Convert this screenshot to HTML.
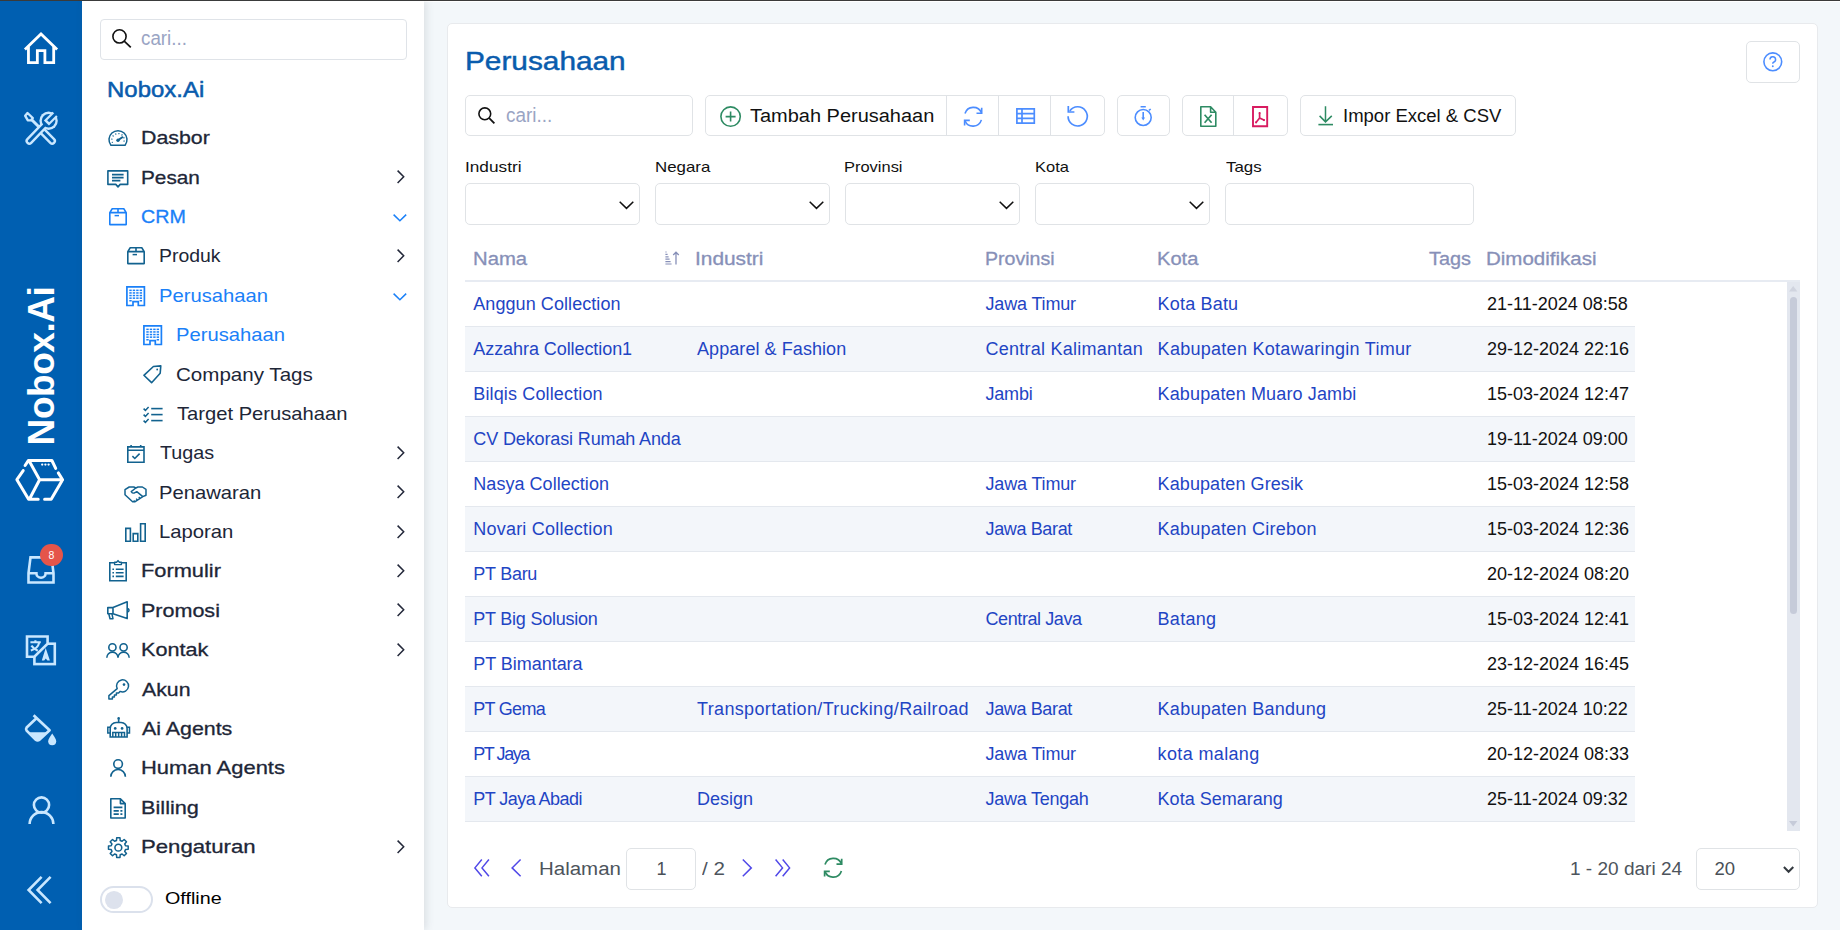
<!DOCTYPE html>
<html lang="id">
<head>
<meta charset="utf-8">
<title>Perusahaan - Nobox.Ai</title>
<style>
*{box-sizing:border-box}
html,body{margin:0;padding:0}
body{width:1840px;height:930px;overflow:hidden;position:relative;background:#f3f7fa;font-family:"Liberation Sans",sans-serif;color:#222}
.abs{position:absolute}
svg{display:block;overflow:visible}
#topline{left:0;top:0;width:1840px;height:1px;background:#3a3a3a}
#topwhite{left:82px;top:1px;width:1758px;height:1px;background:#fff}
#rail{left:0;top:1px;width:82px;height:929px;background:#005fb1}
#menu{left:82px;top:1px;width:342px;height:929px;background:#fff;box-shadow:2px 0 8px rgba(70,75,85,.14)}
#card{left:447px;top:23px;width:1371px;height:885px;background:#fff;border:1px solid #e8eaed;border-radius:5px}
/* menu */
.msearch{left:18px;top:18px;width:307px;height:41px;border:1px solid #dfe3e8;border-radius:4px;background:#fff}

.bx{border:1px solid #e0e3e6;border-radius:5px;background:#fff}
.row{left:17px;width:1170px;height:45px;border-bottom:1px solid #e4e8ee;font-size:18px;line-height:45px;color:#1f45c4;white-space:nowrap}
.row span{position:absolute;top:0}
.row span.d{color:#111}
.pt{height:30px;line-height:30px;white-space:nowrap;transform-origin:0 50%}
</style>
</head>
<body>
<div id="topline" class="abs"></div>
<div id="topwhite" class="abs"></div>
<aside id="rail" class="abs">
<svg class="abs" style="left:24px;top:31px" width="34" height="32" viewBox="0 0 34 32" fill="none" ><path d="M0.9,17.5 L17,2 L33.1,17.5" stroke="#ffffff" stroke-width="2.8" stroke-linejoin="miter"/><path d="M4.45,14.6 V30.6 H13.35 V18.6 H20.9 V30.6 H29.7 V14.6" stroke="#ffffff" stroke-width="2.8"/></svg>
<svg class="abs" style="left:24px;top:111px" width="34" height="33.5" viewBox="0 0 34 33.5" fill="none" ><path d="M16.9,17.5 L28.2,29" stroke="#c9e7ff" stroke-width="7.6" stroke-linecap="round"/><path d="M16.9,17.5 L28.2,29" stroke="#005fb1" stroke-width="2.8" stroke-linecap="round"/><path d="M7,7 L15.5,15.5" stroke="#c9e7ff" stroke-width="3"/><path d="M3.5,1 L1.2,3.8 L3.7,8.2 L6.9,8.4 L8.8,6 Z" stroke="#c9e7ff" stroke-width="2.4" stroke-linejoin="round" fill="#005fb1"/><path d="M5.3,29 L24.6,8.8" stroke="#c9e7ff" stroke-width="7.6" stroke-linecap="round"/><circle cx="24.6" cy="8.8" r="9.2" fill="#c9e7ff"/><circle cx="24.6" cy="8.8" r="6.8" fill="#005fb1"/><path d="M5.3,29 L20.4,13.2" stroke="#005fb1" stroke-width="2.8" stroke-linecap="round"/><path d="M22.4,11 L31.1,2.3" stroke="#c9e7ff" stroke-width="7.2"/><path d="M24.2,9.2 L33.4,0" stroke="#005fb1" stroke-width="2.8"/></svg>
<div class="abs" style="left:41.6px;top:365.2px;width:0;height:0"><div style="position:absolute;left:-100px;top:-25px;width:200px;height:50px;line-height:50px;text-align:center;transform:rotate(-90deg);font-weight:bold;font-size:37px;letter-spacing:-0.45px;color:#fff;white-space:nowrap">Nobox.Ai</div></div>
<svg class="abs" style="left:16px;top:458px" width="48" height="42" viewBox="0 0 48 42" fill="none" ><path d="M9.1,6.5 L12.3,1.6 L35.9,1.5 L39.7,9.4 M42.3,13.9 L46.6,20.7 L35.2,40.3 L28.6,40.3 M22.2,40.3 L12.6,40.3 L0.9,20.7 L7.2,11.6 M13.9,3.3 L23.6,20.7 L46.6,20.7 M23.6,20.7 L13.9,39.2" stroke="#ffffff" stroke-width="3" stroke-linejoin="round" stroke-linecap="round"/><circle cx="26.2" cy="5.6" r="1.15" fill="#ffffff"/><circle cx="29.4" cy="5.6" r="1.15" fill="#ffffff"/><circle cx="32.6" cy="5.6" r="1.15" fill="#ffffff"/></svg>
<svg class="abs" style="left:27px;top:555px" width="28" height="28" viewBox="0 0 28 28" fill="none" ><path d="M3.5,1.4 H24.5 L26.5,17 V26.5 H1.5 V17 Z" stroke="#c9e7ff" stroke-width="2.6" stroke-linejoin="miter"/><path d="M1.5,17.2 H9.4 A4.6,4.6 0 0 0 18.6,17.2 H26.5" stroke="#c9e7ff" stroke-width="2.6"/></svg>
<div class="abs" style="left:40.1px;top:542.6px;width:22.8px;height:22.8px;border-radius:50%;background:#e5554a;color:#fff;font-size:10.5px;line-height:22.8px;text-align:center">8</div>
<svg class="abs" style="left:25px;top:633.7px" width="31.2" height="30.5" viewBox="0 0 31.2 30.5" fill="none" ><rect x="9.4" y="8.7" width="20.4" height="20.4" stroke="#c9e7ff" stroke-width="2.6"/><path d="M2,1.5 H22.6 V8.7 L9.4,21.7 H2 Z" fill="#005fb1" stroke="#c9e7ff" stroke-width="2.6"/><path d="M5.4,7.3 H15.8 M10.4,5.2 V7.3 M14.2,7.6 Q13,13.4 5.8,15.6 M6.4,10.6 Q8.4,13.6 12.8,15.8" stroke="#c9e7ff" stroke-width="2.1"/><path d="M16.8,25.4 L20.7,13 L24.9,25.4 H22.4 L20.8,23.6 L19.2,25.4 Z" fill="#c9e7ff"/></svg>
<svg class="abs" style="left:25px;top:713.4px" width="31.3" height="30.4" viewBox="0 0 31.3 30.4" fill="none" ><path d="M8.6,1.2 L24.6,16.2 L14.6,25.6 Q12.6,27 10.6,25.6 L1.6,16.6 Q0.6,15 1.6,13.6 L11.4,4.2" stroke="#c9e7ff" stroke-width="2.7" stroke-linejoin="round"/><path d="M4.6,18.2 H21.8 L14.2,25 Q12.6,26 11,25 Z" fill="#c9e7ff"/><path d="M27.2,19.6 Q31.2,25.2 31.2,27.2 A4,4 0 0 1 23.2,27.2 Q23.2,25.2 27.2,19.6 Z" fill="#c9e7ff"/></svg>
<svg class="abs" style="left:27.5px;top:794.8px" width="26.5" height="29.2" viewBox="0 0 26.5 29.2" fill="none" ><circle cx="13.5" cy="9" r="7.6" stroke="#c9e7ff" stroke-width="2.6"/><path d="M1.6,28 A11.9,11.9 0 0 1 25.4,28" stroke="#c9e7ff" stroke-width="2.6"/></svg>
<svg class="abs" style="left:27px;top:874.8px" width="24.6" height="28" viewBox="0 0 24.6 28" fill="none" ><path d="M14.6,0.9 L1.6,14 L14.6,27.1 M23.6,0.9 L10.6,14 L23.6,27.1" stroke="#c9e7ff" stroke-width="2.6"/></svg>
</aside>
<nav id="menu" class="abs">
<div class="abs msearch"><svg class="abs" style="left:11px;top:9.2px" width="20" height="20" viewBox="0 0 20 20" fill="none" ><circle cx="7.5" cy="7.4" r="6.6" stroke="#111" stroke-width="1.6"/><path d="M12.2,12.1 L18.8,18.4" stroke="#111" stroke-width="1.7"/></svg></div>
<div class="abs pt" style="left:59.04px;top:22.00px;font-size:19.5px;color:#9aa5c4;transform:scaleX(0.9622);">cari...</div>
<div class="abs pt" style="left:24.77px;top:74.00px;font-size:21.5px;color:#0a5cad;transform:scaleX(1.1143);-webkit-text-stroke:0.5px #0a5cad;">Nobox.Ai</div>
<svg class="abs" style="left:26.0px;top:129.0px" width="20" height="16" viewBox="0 0 20 16" fill="none" ><path d="M2.9,15.2 A9,9 0 1 1 17.1,15.2 Z" stroke="#12628f" stroke-width="1.5"  stroke-linejoin="round"/><path d="M4.6,12.8 A6.2,6.2 0 1 1 15.4,12.8" stroke="#12628f" stroke-width="1.3"  stroke-dasharray="1.1 2.2"/><path d="M10,10.3 L14.3,7.2" stroke="#12628f" stroke-width="2"  stroke-linecap="round"/><circle cx="10" cy="10.3" r="1.7" fill="#12628f"/></svg>
<div class="abs pt" style="left:59.28px;top:122.00px;font-size:19px;color:#202637;transform:scaleX(1.1233);-webkit-text-stroke:0.3px #202637;">Dasbor</div>
<svg class="abs" style="left:25.0px;top:169.3px" width="21.6" height="18" viewBox="0 0 21.6 18" fill="none" ><path d="M0.9,0.9 H20.7 V14.4 H13.2 L11,16.9 L8.8,14.4 H0.9 Z" stroke="#12628f" stroke-width="1.6"  stroke-linejoin="round"/><path d="M5,4.6 H16.6 M5,7.6 H16.6 M5,10.6 H13.4" stroke="#12628f" stroke-width="1.9" /></svg>
<div class="abs pt" style="left:59.31px;top:162.00px;font-size:19px;color:#202637;transform:scaleX(1.0923);-webkit-text-stroke:0.3px #202637;">Pesan</div>
<svg class="abs" style="left:314.9px;top:169.19px" width="7.4" height="13.6" viewBox="0 0 7.4 13.6" fill="none" ><path d="M0.6,0.6 L6.7,6.8 L0.6,13" stroke="#23283a" stroke-width="1.5" /></svg>
<svg class="abs" style="left:27.0px;top:207.4px" width="18" height="17.4" viewBox="0 0 18 17.4" fill="none" ><path d="M0.8,4.6 L3.2,0.8 H14.8 L17.2,4.6 V16.6 H0.8 Z M0.8,4.6 H17.2 M9,0.8 V4.6" stroke="#1a80f8" stroke-width="1.6"  stroke-linejoin="round"/><path d="M5.6,7.6 H10" stroke="#1a80f8" stroke-width="1.5" /></svg>
<div class="abs pt" style="left:59.36px;top:201.00px;font-size:19px;color:#1a80f8;transform:scaleX(1.0366);-webkit-text-stroke:0.3px #1a80f8;">CRM</div>
<svg class="abs" style="left:311.2px;top:213.48px" width="13.8" height="7.4" viewBox="0 0 13.8 7.4" fill="none" ><path d="M0.6,0.6 L6.9,6.7 L13.2,0.6" stroke="#1a80f8" stroke-width="1.5" /></svg>
<svg class="abs" style="left:44.6px;top:246.3px" width="18" height="17.4" viewBox="0 0 18 17.4" fill="none" ><path d="M0.8,4.6 L3.2,0.8 H14.8 L17.2,4.6 V16.6 H0.8 Z M0.8,4.6 H17.2 M9,0.8 V4.6" stroke="#12628f" stroke-width="1.6"  stroke-linejoin="round"/><path d="M5.6,7.6 H10" stroke="#12628f" stroke-width="1.5" /></svg>
<div class="abs pt" style="left:76.65px;top:240.00px;font-size:18.5px;color:#202637;transform:scaleX(1.0491);">Produk</div>
<svg class="abs" style="left:314.9px;top:247.97px" width="7.4" height="13.6" viewBox="0 0 7.4 13.6" fill="none" ><path d="M0.6,0.6 L6.7,6.8 L0.6,13" stroke="#23283a" stroke-width="1.5" /></svg>
<svg class="abs" style="left:44.0px;top:285.0px" width="19.3" height="20.4" viewBox="0 0 19.3 20.4" fill="none" ><path d="M0.9,0.9 H18.4 V19.5 H12.3 V15.6 H7 V19.5 H0.9 Z" stroke="#1a80f8" stroke-width="1.7"  stroke-linejoin="miter"/><rect x="3.30" y="3.60" width="2.4" height="1.5" fill="#1a80f8"/><rect x="6.75" y="3.60" width="2.4" height="1.5" fill="#1a80f8"/><rect x="10.20" y="3.60" width="2.4" height="1.5" fill="#1a80f8"/><rect x="13.65" y="3.60" width="2.4" height="1.5" fill="#1a80f8"/><rect x="3.30" y="6.20" width="2.4" height="1.5" fill="#1a80f8"/><rect x="6.75" y="6.20" width="2.4" height="1.5" fill="#1a80f8"/><rect x="10.20" y="6.20" width="2.4" height="1.5" fill="#1a80f8"/><rect x="13.65" y="6.20" width="2.4" height="1.5" fill="#1a80f8"/><rect x="3.30" y="8.80" width="2.4" height="1.5" fill="#1a80f8"/><rect x="6.75" y="8.80" width="2.4" height="1.5" fill="#1a80f8"/><rect x="10.20" y="8.80" width="2.4" height="1.5" fill="#1a80f8"/><rect x="13.65" y="8.80" width="2.4" height="1.5" fill="#1a80f8"/><rect x="3.30" y="11.40" width="2.4" height="1.5" fill="#1a80f8"/><rect x="6.75" y="11.40" width="2.4" height="1.5" fill="#1a80f8"/><rect x="10.20" y="11.40" width="2.4" height="1.5" fill="#1a80f8"/><rect x="13.65" y="11.40" width="2.4" height="1.5" fill="#1a80f8"/><rect x="3.30" y="14.00" width="2.4" height="1.5" fill="#1a80f8"/><rect x="13.65" y="14.00" width="2.4" height="1.5" fill="#1a80f8"/></svg>
<div class="abs pt" style="left:76.61px;top:280.00px;font-size:18.5px;color:#1a80f8;transform:scaleX(1.0918);">Perusahaan</div>
<svg class="abs" style="left:311.2px;top:292.26px" width="13.8" height="7.4" viewBox="0 0 13.8 7.4" fill="none" ><path d="M0.6,0.6 L6.9,6.7 L13.2,0.6" stroke="#1a80f8" stroke-width="1.5" /></svg>
<svg class="abs" style="left:61.4px;top:323.9px" width="19.3" height="20.4" viewBox="0 0 19.3 20.4" fill="none" ><path d="M0.9,0.9 H18.4 V19.5 H12.3 V15.6 H7 V19.5 H0.9 Z" stroke="#1a80f8" stroke-width="1.7"  stroke-linejoin="miter"/><rect x="3.30" y="3.60" width="2.4" height="1.5" fill="#1a80f8"/><rect x="6.75" y="3.60" width="2.4" height="1.5" fill="#1a80f8"/><rect x="10.20" y="3.60" width="2.4" height="1.5" fill="#1a80f8"/><rect x="13.65" y="3.60" width="2.4" height="1.5" fill="#1a80f8"/><rect x="3.30" y="6.20" width="2.4" height="1.5" fill="#1a80f8"/><rect x="6.75" y="6.20" width="2.4" height="1.5" fill="#1a80f8"/><rect x="10.20" y="6.20" width="2.4" height="1.5" fill="#1a80f8"/><rect x="13.65" y="6.20" width="2.4" height="1.5" fill="#1a80f8"/><rect x="3.30" y="8.80" width="2.4" height="1.5" fill="#1a80f8"/><rect x="6.75" y="8.80" width="2.4" height="1.5" fill="#1a80f8"/><rect x="10.20" y="8.80" width="2.4" height="1.5" fill="#1a80f8"/><rect x="13.65" y="8.80" width="2.4" height="1.5" fill="#1a80f8"/><rect x="3.30" y="11.40" width="2.4" height="1.5" fill="#1a80f8"/><rect x="6.75" y="11.40" width="2.4" height="1.5" fill="#1a80f8"/><rect x="10.20" y="11.40" width="2.4" height="1.5" fill="#1a80f8"/><rect x="13.65" y="11.40" width="2.4" height="1.5" fill="#1a80f8"/><rect x="3.30" y="14.00" width="2.4" height="1.5" fill="#1a80f8"/><rect x="13.65" y="14.00" width="2.4" height="1.5" fill="#1a80f8"/></svg>
<div class="abs pt" style="left:93.91px;top:319.00px;font-size:18.5px;color:#1a80f8;transform:scaleX(1.0918);">Perusahaan</div>
<svg class="abs" style="left:61.4px;top:364.2px" width="18.7" height="18.6" viewBox="0 0 18.7 18.6" fill="none" ><path d="M0.9,10.3 L10.4,1.5 L17.8,0.9 L17.2,8.3 L8.6,17.7 Z" stroke="#12628f" stroke-width="1.6"  stroke-linejoin="round"/><circle cx="14.2" cy="4.5" r="0.9" fill="#12628f"/></svg>
<div class="abs pt" style="left:93.89px;top:359.00px;font-size:18.5px;color:#202637;transform:scaleX(1.1115);">Company Tags</div>
<svg class="abs" style="left:61.4px;top:405.0px" width="19.6" height="17" viewBox="0 0 19.6 17" fill="none" ><path d="M0.6,2.6 L2.4,4.4 L5.6,1.0" stroke="#12628f" stroke-width="1.5" /><path d="M8.2,2.6 H19.6" stroke="#12628f" stroke-width="1.6" /><path d="M0.6,8.6 L2.4,10.4 L5.6,7.0" stroke="#12628f" stroke-width="1.5" /><path d="M8.2,8.6 H19.6" stroke="#12628f" stroke-width="1.6" /><path d="M0.6,14.6 L2.4,16.4 L5.6,13.0" stroke="#12628f" stroke-width="1.5" /><path d="M8.2,14.6 H19.6" stroke="#12628f" stroke-width="1.6" /></svg>
<div class="abs pt" style="left:95.00px;top:398.00px;font-size:18.5px;color:#202637;transform:scaleX(1.0903);">Target Perusahaan</div>
<svg class="abs" style="left:44.9px;top:443.5px" width="17.8" height="18" viewBox="0 0 17.8 18" fill="none" ><path d="M0.8,1.9 H17 V17.3 H0.8 Z M0.8,5.2 H17 M4.1,0 V2 M13.7,0 V2" stroke="#12628f" stroke-width="1.6" /><path d="M5.4,11.2 L7.8,13.5 L12.6,8.6" stroke="#12628f" stroke-width="1.6" /></svg>
<div class="abs pt" style="left:77.70px;top:437.00px;font-size:18.5px;color:#202637;transform:scaleX(1.0680);">Tugas</div>
<svg class="abs" style="left:314.9px;top:444.92px" width="7.4" height="13.6" viewBox="0 0 7.4 13.6" fill="none" ><path d="M0.6,0.6 L6.7,6.8 L0.6,13" stroke="#23283a" stroke-width="1.5" /></svg>
<svg class="abs" style="left:42.0px;top:485.0px" width="23" height="16.6" viewBox="0 0 23 16.6" fill="none" ><path d="M1,3.6 L5.2,1 H9.8 L11.8,2 L14,1 H18.4 L22,3.4 V9.2 L18.8,10.6 L10.8,15.8 L8.6,15.8 L1,8.8 Z" stroke="#12628f" stroke-width="1.5"  stroke-linejoin="round"/><path d="M11.8,2 L7.2,5.6 Q8.8,8 11,6.6 L12.8,5.6 L18.8,10.6 M10.8,15.8 L9.8,14.4 M13.4,14.2 L12.2,12.6 M16,12.4 L14.8,10.8" stroke="#12628f" stroke-width="1.4"  stroke-linejoin="round"/></svg>
<div class="abs pt" style="left:76.61px;top:477.00px;font-size:18.5px;color:#202637;transform:scaleX(1.0924);">Penawaran</div>
<svg class="abs" style="left:314.9px;top:484.31px" width="7.4" height="13.6" viewBox="0 0 7.4 13.6" fill="none" ><path d="M0.6,0.6 L6.7,6.8 L0.6,13" stroke="#23283a" stroke-width="1.5" /></svg>
<svg class="abs" style="left:43.0px;top:521.6px" width="21" height="19" viewBox="0 0 21 19" fill="none" ><path d="M0.8,5.4 H5.4 V18.2 H0.8 Z M8.2,10.6 H12.8 V18.2 H8.2 Z M15.6,0.8 H20.2 V18.2 H15.6 Z" stroke="#12628f" stroke-width="1.6" /></svg>
<div class="abs pt" style="left:76.60px;top:516.00px;font-size:18.5px;color:#202637;transform:scaleX(1.0955);">Laporan</div>
<svg class="abs" style="left:314.9px;top:523.7px" width="7.4" height="13.6" viewBox="0 0 7.4 13.6" fill="none" ><path d="M0.6,0.6 L6.7,6.8 L0.6,13" stroke="#23283a" stroke-width="1.5" /></svg>
<svg class="abs" style="left:27.0px;top:559.0px" width="18" height="21.6" viewBox="0 0 18 21.6" fill="none" ><path d="M5.6,2.8 H0.8 V20.8 H17.2 V2.8 H12.4" stroke="#12628f" stroke-width="1.6" /><path d="M5.6,4.6 V2.2 H7.6 L9,0.6 L10.4,2.2 H12.4 V4.6 Z" stroke="#12628f" stroke-width="1.4"  stroke-linejoin="round"/><path d="M3.4,9.2 H5 M6.8,9.2 H14.6" stroke="#12628f" stroke-width="1.6" /><path d="M3.4,12.8 H5 M6.8,12.8 H14.6" stroke="#12628f" stroke-width="1.6" /><path d="M3.4,16.4 H5 M6.8,16.4 H14.6" stroke="#12628f" stroke-width="1.6" /></svg>
<div class="abs pt" style="left:59.25px;top:555.00px;font-size:19px;color:#202637;transform:scaleX(1.1471);-webkit-text-stroke:0.3px #202637;">Formulir</div>
<svg class="abs" style="left:314.9px;top:563.09px" width="7.4" height="13.6" viewBox="0 0 7.4 13.6" fill="none" ><path d="M0.6,0.6 L6.7,6.8 L0.6,13" stroke="#23283a" stroke-width="1.5" /></svg>
<svg class="abs" style="left:24.7px;top:600.4px" width="22.7" height="18.6" viewBox="0 0 22.7 18.6" fill="none" ><path d="M0.8,6.6 H6 L20.2,0.8 V17.6 L6,12.8 H0.8 Z M6,6.6 V12.8" stroke="#12628f" stroke-width="1.6"  stroke-linejoin="round"/><path d="M1.8,12.8 L3,17.8 H6 L5,12.8" stroke="#12628f" stroke-width="1.5"  stroke-linejoin="round"/><path d="M20.2,7.4 A1.8,1.8 0 0 1 20.2,11" stroke="#12628f" stroke-width="1.5" /></svg>
<div class="abs pt" style="left:59.27px;top:595.00px;font-size:19px;color:#202637;transform:scaleX(1.1324);-webkit-text-stroke:0.3px #202637;">Promosi</div>
<svg class="abs" style="left:314.9px;top:602.48px" width="7.4" height="13.6" viewBox="0 0 7.4 13.6" fill="none" ><path d="M0.6,0.6 L6.7,6.8 L0.6,13" stroke="#23283a" stroke-width="1.5" /></svg>
<svg class="abs" style="left:24.2px;top:642.0px" width="24" height="14.7" viewBox="0 0 24 14.7" fill="none" ><circle cx="6.4" cy="4.4" r="3.6" stroke="#12628f" stroke-width="1.6" /><circle cx="17.6" cy="4.4" r="3.6" stroke="#12628f" stroke-width="1.6" /><path d="M0.8,14.7 A5.6,5.6 0 0 1 12,14.7 A5.6,5.6 0 0 1 23.2,14.7" stroke="#12628f" stroke-width="1.6" /></svg>
<div class="abs pt" style="left:59.26px;top:634.00px;font-size:19px;color:#202637;transform:scaleX(1.1379);-webkit-text-stroke:0.3px #202637;">Kontak</div>
<svg class="abs" style="left:314.9px;top:641.87px" width="7.4" height="13.6" viewBox="0 0 7.4 13.6" fill="none" ><path d="M0.6,0.6 L6.7,6.8 L0.6,13" stroke="#23283a" stroke-width="1.5" /></svg>
<svg class="abs" style="left:25.5px;top:678.0px" width="21" height="20.7" viewBox="0 0 21 20.7" fill="none" ><path d="M9.2,9.6 A6,6 0 1 1 12.2,12.4 L10.6,14 H8.4 V16 H6.4 V18 H4.4 V20 H0.9 V16.6 Z" stroke="#12628f" stroke-width="1.5"  stroke-linejoin="round"/><circle cx="16" cy="5.6" r="1.3" fill="#12628f"/></svg>
<div class="abs pt" style="left:60.40px;top:674.00px;font-size:19px;color:#202637;transform:scaleX(1.1190);-webkit-text-stroke:0.3px #202637;">Akun</div>
<svg class="abs" style="left:24.7px;top:716.3px" width="23.3" height="20.7" viewBox="0 0 23.3 20.7" fill="none" ><path d="M3.2,20 V11.5 A6,6 0 0 1 9.2,5.5 H14.1 A6,6 0 0 1 20.1,11.5 V20 Z" stroke="#12628f" stroke-width="1.6" /><path d="M11.65,5.5 V2.2" stroke="#12628f" stroke-width="1.6" /><circle cx="11.65" cy="1.4" r="1.3" fill="#12628f"/><path d="M3.2,10.2 H0.8 V16 H3.2 M20.1,10.2 H22.5 V16 H20.1" stroke="#12628f" stroke-width="1.5" /><circle cx="8.2" cy="11.4" r="1.35" fill="#12628f"/><circle cx="15.1" cy="11.4" r="1.35" fill="#12628f"/><path d="M5.8,20 V15.6 H17.5 V20 M8.7,15.6 V20 M11.65,15.6 V20 M14.6,15.6 V20" stroke="#12628f" stroke-width="1.5" /></svg>
<div class="abs pt" style="left:60.40px;top:713.00px;font-size:19px;color:#202637;transform:scaleX(1.1250);-webkit-text-stroke:0.3px #202637;">Ai Agents</div>
<svg class="abs" style="left:28.3px;top:758.2px" width="16.2" height="17.8" viewBox="0 0 16.2 17.8" fill="none" ><circle cx="8.1" cy="5.1" r="4.3" stroke="#12628f" stroke-width="1.6" /><path d="M0.8,17.8 A7.3,7.3 0 0 1 15.4,17.8" stroke="#12628f" stroke-width="1.6" /></svg>
<div class="abs pt" style="left:59.25px;top:752.00px;font-size:19px;color:#202637;transform:scaleX(1.1545);-webkit-text-stroke:0.3px #202637;">Human Agents</div>
<svg class="abs" style="left:28.3px;top:797.0px" width="16" height="20.8" viewBox="0 0 16 20.8" fill="none" ><path d="M0.8,0.8 H10.4 L15.2,5.6 V20 H0.8 Z M10.4,0.8 V5.6 H15.2" stroke="#12628f" stroke-width="1.6"  stroke-linejoin="round"/><path d="M3.6,9.4 H12.4 M3.6,12.8 H8.8 M10.4,12.8 H12.4 M3.6,16.2 H8.8 M10.4,16.2 H12.4" stroke="#12628f" stroke-width="1.7" /></svg>
<div class="abs pt" style="left:59.26px;top:792.00px;font-size:19px;color:#202637;transform:scaleX(1.1429);-webkit-text-stroke:0.3px #202637;">Billing</div>
<svg class="abs" style="left:25.7px;top:835.6px" width="20.7" height="21.3" viewBox="0 0 20.7 21.3" fill="none" ><path d="M8.50,3.49 L8.70,0.79 L12.00,0.79 L12.20,3.49 L14.11,4.27 L16.16,2.51 L18.49,4.84 L16.73,6.89 L17.51,8.80 L20.21,9.00 L20.21,12.30 L17.51,12.50 L16.73,14.41 L18.49,16.46 L16.16,18.79 L14.11,17.03 L12.20,17.81 L12.00,20.51 L8.70,20.51 L8.50,17.81 L6.59,17.03 L4.54,18.79 L2.21,16.46 L3.97,14.41 L3.19,12.50 L0.49,12.30 L0.49,9.00 L3.19,8.80 L3.97,6.89 L2.21,4.84 L4.54,2.51 L6.59,4.27 Z" stroke="#12628f" stroke-width="1.5"  stroke-linejoin="round"/><circle cx="10.35" cy="10.65" r="3.4" stroke="#12628f" stroke-width="1.6" /></svg>
<div class="abs pt" style="left:59.23px;top:831.00px;font-size:19px;color:#202637;transform:scaleX(1.1667);-webkit-text-stroke:0.3px #202637;">Pengaturan</div>
<svg class="abs" style="left:314.9px;top:838.82px" width="7.4" height="13.6" viewBox="0 0 7.4 13.6" fill="none" ><path d="M0.6,0.6 L6.7,6.8 L0.6,13" stroke="#23283a" stroke-width="1.5" /></svg>
<div class="abs" style="left:18px;top:885.2px;width:52.8px;height:26.6px;border:2px solid #dbe1ec;border-radius:14px;background:#fff"></div>
<div class="abs" style="left:23px;top:890px;width:17.8px;height:17.8px;border-radius:50%;background:#dde2ed"></div>
<div class="abs pt" style="left:83.10px;top:882.00px;font-size:16.5px;color:#000;transform:scaleX(1.1957);">Offline</div>
</nav>
<main id="card" class="abs">
<div class="abs pt" style="left:17.01px;top:22.00px;font-size:26px;color:#0a5cad;transform:scaleX(1.1460);-webkit-text-stroke:0.45px #0a5cad;">Perusahaan</div>
<div class="abs bx" style="left:1298px;top:17px;width:54px;height:42px;"></div>
<svg class="abs" style="left:1314.6px;top:28.3px" width="19.6" height="19.6" viewBox="0 0 19.6 19.6" fill="none" ><circle cx="9.8" cy="9.8" r="8.9" stroke="#4c8dff" stroke-width="1.6"/><path d="M7,7.6 A2.8,2.8 0 1 1 10.6,10.2 Q9.8,10.6 9.8,11.8" stroke="#4c8dff" stroke-width="1.5"/><circle cx="9.8" cy="14.3" r="0.95" fill="#4c8dff"/></svg>
<div class="abs bx" style="left:17px;top:71px;width:228px;height:41px;"></div>
<svg class="abs" style="left:30px;top:82.6px" width="17" height="17" viewBox="0 0 17 17" fill="none" ><circle cx="6.8" cy="6.8" r="5.9" stroke="#111" stroke-width="1.6"/><path d="M11.2,11.2 L16.4,16.4" stroke="#111" stroke-width="1.8"/></svg>
<div class="abs pt" style="left:58.03px;top:76.00px;font-size:19.5px;color:#9aa5c4;transform:scaleX(0.9689);">cari...</div>
<div class="abs bx" style="left:257px;top:71px;width:400px;height:41px;"></div>
<div class="abs" style="left:498px;top:72px;width:1px;height:39px;background:#dfe2e6"></div>
<div class="abs" style="left:550px;top:72px;width:1px;height:39px;background:#dfe2e6"></div>
<div class="abs" style="left:602px;top:72px;width:1px;height:39px;background:#dfe2e6"></div>
<svg class="abs" style="left:272.4px;top:81.6px" width="21.2" height="21.2" viewBox="0 0 21.2 21.2" fill="none" ><circle cx="10.6" cy="10.6" r="9.7" stroke="#2e8b63" stroke-width="1.6"/><path d="M10.6,5.6 V15.6 M5.6,10.6 H15.6" stroke="#2e8b63" stroke-width="1.6"/></svg>
<div class="abs pt" style="left:302.20px;top:77.00px;font-size:18px;color:#111;transform:scaleX(1.1091);">Tambah Perusahaan</div>
<svg class="abs" style="left:515.8px;top:82.5px" width="18.3" height="19.2" viewBox="0 0 18.3 19.2" fill="none" ><path d="M1,6.6 A8.7,8.7 0 0 1 17.4,5.8 M17.4,12.9 A8.7,8.7 0 0 1 1,13.7" stroke="#4c8dff" stroke-width="1.6"/><path d="M17.7,0.8 V6.2 H12.5 M0.6,18.4 V13.4 H5.8" stroke="#4c8dff" stroke-width="1.6"/></svg>
<svg class="abs" style="left:567.7px;top:83.8px" width="19.2" height="16" viewBox="0 0 19.2 16" fill="none" ><path d="M0.9,0.9 H18.3 V15.1 H0.9 Z M0.9,5.6 H18.3 M0.9,10.4 H18.3 M6,0.9 V15.1" stroke="#4c8dff" stroke-width="1.7"/></svg>
<svg class="abs" style="left:618.8px;top:81.3px" width="21.4" height="22" viewBox="0 0 21.4 22" fill="none" ><path d="M2.8,5.9 A9.6,9.6 0 1 1 1.1,11.2" stroke="#4c8dff" stroke-width="1.7"/><path d="M1.3,1 V7 H7.4" stroke="#4c8dff" stroke-width="1.7"/></svg>
<div class="abs bx" style="left:669px;top:71px;width:53px;height:41px;"></div>
<svg class="abs" style="left:685.9px;top:81.4px" width="18.4" height="21.6" viewBox="0 0 18.4 21.6" fill="none" ><circle cx="9.2" cy="12.5" r="8" stroke="#4c8dff" stroke-width="1.6"/><path d="M6.6,1.7 H11.8 M15,5.4 L16.7,4 M9.2,7 V13" stroke="#4c8dff" stroke-width="1.6"/><path d="M7.3,12.4 H11.1 L9.2,15.4 Z" fill="#4c8dff"/></svg>
<div class="abs bx" style="left:734px;top:71px;width:106px;height:41px;"></div>
<div class="abs" style="left:785px;top:72px;width:1px;height:39px;background:#dfe2e6"></div>
<svg class="abs" style="left:752.2px;top:81.7px" width="16.6" height="21" viewBox="0 0 16.6 21" fill="none" ><path d="M0.8,0.8 H10.6 L15.8,6.2 V20.2 H0.8 Z M10.6,0.8 V6.2 H15.8" stroke="#2e8b63" stroke-width="1.6" stroke-linejoin="round"/><path d="M4.6,8.8 L11.6,16.8 M11.6,8.8 L4.6,16.8" stroke="#2e8b63" stroke-width="1.7"/></svg>
<svg class="abs" style="left:804.3px;top:81.6px" width="16.2" height="21.2" viewBox="0 0 16.2 21.2" fill="none" ><path d="M1,1 H15.2 V20.2 H1 Z" stroke="#d81b60" stroke-width="1.9"/><path d="M7.6,7.2 V12 L4.2,16.2 M7.6,12 L11.9,14" stroke="#d81b60" stroke-width="1.7" stroke-linecap="round"/><circle cx="7.6" cy="7.1" r="1.05" fill="#d81b60"/><circle cx="4.1" cy="16.4" r="1.05" fill="#d81b60"/><circle cx="12" cy="14.1" r="1.05" fill="#d81b60"/></svg>
<div class="abs bx" style="left:852px;top:71px;width:216px;height:41px;"></div>
<svg class="abs" style="left:870.4px;top:82.4px" width="15.4" height="20" viewBox="0 0 15.4 20" fill="none" ><path d="M7.5,0.2 V15.6 M1.6,9.9 L7.5,15.9 L13.8,9.9" stroke="#2e8b63" stroke-width="1.5"/><path d="M0.4,18.6 H15" stroke="#2e8b63" stroke-width="1.6"/></svg>
<div class="abs pt" style="left:894.94px;top:77.00px;font-size:18px;color:#111;transform:scaleX(1.0283);">Impor Excel &amp; CSV</div>
<div class="abs pt" style="left:16.64px;top:128.00px;font-size:14.8px;color:#111;transform:scaleX(1.1638);">Industri</div>
<div class="abs bx" style="left:17px;top:159px;width:175px;height:42px;"></div>
<svg class="abs" style="left:171px;top:176.6px" width="15" height="8.6" viewBox="0 0 15 8.6" fill="none" ><path d="M0.7,0.8 L7.5,7.4 L14.3,0.8" stroke="#111" stroke-width="1.5"/></svg>
<div class="abs pt" style="left:206.76px;top:128.00px;font-size:14.8px;color:#111;transform:scaleX(1.1396);">Negara</div>
<div class="abs bx" style="left:207px;top:159px;width:175px;height:42px;"></div>
<svg class="abs" style="left:361px;top:176.6px" width="15" height="8.6" viewBox="0 0 15 8.6" fill="none" ><path d="M0.7,0.8 L7.5,7.4 L14.3,0.8" stroke="#111" stroke-width="1.5"/></svg>
<div class="abs pt" style="left:396.39px;top:128.00px;font-size:14.8px;color:#111;transform:scaleX(1.1118);">Provinsi</div>
<div class="abs bx" style="left:397px;top:159px;width:175px;height:42px;"></div>
<svg class="abs" style="left:551px;top:176.6px" width="15" height="8.6" viewBox="0 0 15 8.6" fill="none" ><path d="M0.7,0.8 L7.5,7.4 L14.3,0.8" stroke="#111" stroke-width="1.5"/></svg>
<div class="abs pt" style="left:586.59px;top:128.00px;font-size:14.8px;color:#111;transform:scaleX(1.1133);">Kota</div>
<div class="abs bx" style="left:587px;top:159px;width:175px;height:42px;"></div>
<svg class="abs" style="left:741px;top:176.6px" width="15" height="8.6" viewBox="0 0 15 8.6" fill="none" ><path d="M0.7,0.8 L7.5,7.4 L14.3,0.8" stroke="#111" stroke-width="1.5"/></svg>
<div class="abs pt" style="left:777.90px;top:128.00px;font-size:14.8px;color:#111;transform:scaleX(1.1419);">Tags</div>
<div class="abs bx" style="left:777px;top:159px;width:249px;height:42px;"></div>
<div class="abs pt" style="left:24.67px;top:220.00px;font-size:18px;color:#8790b8;transform:scaleX(1.1255);-webkit-text-stroke:0.3px #8790b8;">Nama</div>
<div class="abs pt" style="left:247.28px;top:220.00px;font-size:18px;color:#8790b8;transform:scaleX(1.1589);-webkit-text-stroke:0.3px #8790b8;">Industri</div>
<div class="abs pt" style="left:536.71px;top:220.00px;font-size:18px;color:#8790b8;transform:scaleX(1.0871);-webkit-text-stroke:0.3px #8790b8;">Provinsi</div>
<div class="abs pt" style="left:709.18px;top:220.00px;font-size:18px;color:#8790b8;transform:scaleX(1.1167);-webkit-text-stroke:0.3px #8790b8;">Kota</div>
<div class="abs pt" style="left:980.60px;top:220.00px;font-size:18px;color:#8790b8;transform:scaleX(1.1026);-webkit-text-stroke:0.3px #8790b8;">Tags</div>
<div class="abs pt" style="left:1037.86px;top:220.00px;font-size:18px;color:#8790b8;transform:scaleX(1.1389);-webkit-text-stroke:0.3px #8790b8;">Dimodifikasi</div>
<svg class="abs" style="left:217px;top:227px" width="14.4" height="14" viewBox="0 0 14.4 14" fill="none" ><path d="M0.4,1 H1.6 M0.4,3.4 H2.6 M0.4,5.8 H3.6 M0.4,8.2 H4.6 M0.4,10.6 H5.6 M0.4,13 H6.6" stroke="#8790b8" stroke-width="1.2"/><path d="M11,13.6 V1.2 M8.2,4 L11,1.2 L13.8,4" stroke="#8790b8" stroke-width="1.3"/></svg>
<div class="abs" style="left:17px;top:256px;width:1335px;height:2px;background:#e7ebf2"></div>
<div class="abs row" style="top:258px;background:#fff"><span style="left:8.3px;letter-spacing:0.07px">Anggun Collection</span><span style="left:520.5px;letter-spacing:-0.16px">Jawa Timur</span><span style="left:692.6px;letter-spacing:0.18px">Kota Batu</span><span class="d" style="left:1022px">21-11-2024 08:58</span></div>
<div class="abs row" style="top:303px;background:#f3f6fa"><span style="left:8.3px;letter-spacing:-0.07px">Azzahra Collection1</span><span style="left:232px;letter-spacing:0.07px">Apparel &amp; Fashion</span><span style="left:520.5px;letter-spacing:0.25px">Central Kalimantan</span><span style="left:692.6px;letter-spacing:0.28px">Kabupaten Kotawaringin Timur</span><span class="d" style="left:1022px">29-12-2024 22:16</span></div>
<div class="abs row" style="top:348px;background:#fff"><span style="left:8.3px;letter-spacing:0.14px">Bilqis Collection</span><span style="left:520.5px;letter-spacing:-0.2px">Jambi</span><span style="left:692.6px;letter-spacing:0.13px">Kabupaten Muaro Jambi</span><span class="d" style="left:1022px">15-03-2024 12:47</span></div>
<div class="abs row" style="top:393px;background:#f3f6fa"><span style="left:8.3px;letter-spacing:-0.13px">CV Dekorasi Rumah Anda</span><span class="d" style="left:1022px">19-11-2024 09:00</span></div>
<div class="abs row" style="top:438px;background:#fff"><span style="left:8.3px;letter-spacing:0.04px">Nasya Collection</span><span style="left:520.5px;letter-spacing:-0.16px">Jawa Timur</span><span style="left:692.6px;letter-spacing:0.09px">Kabupaten Gresik</span><span class="d" style="left:1022px">15-03-2024 12:58</span></div>
<div class="abs row" style="top:483px;background:#f3f6fa"><span style="left:8.3px;letter-spacing:0.21px">Novari Collection</span><span style="left:520.5px;letter-spacing:-0.36px">Jawa Barat</span><span style="left:692.6px;letter-spacing:0.24px">Kabupaten Cirebon</span><span class="d" style="left:1022px">15-03-2024 12:36</span></div>
<div class="abs row" style="top:528px;background:#fff"><span style="left:8.3px;letter-spacing:-0.27px">PT Baru</span><span class="d" style="left:1022px">20-12-2024 08:20</span></div>
<div class="abs row" style="top:573px;background:#f3f6fa"><span style="left:8.3px;letter-spacing:-0.23px">PT Big Solusion</span><span style="left:520.5px;letter-spacing:-0.41px">Central Java</span><span style="left:692.6px;letter-spacing:0.26px">Batang</span><span class="d" style="left:1022px">15-03-2024 12:41</span></div>
<div class="abs row" style="top:618px;background:#fff"><span style="left:8.3px;letter-spacing:-0.04px">PT Bimantara</span><span class="d" style="left:1022px">23-12-2024 16:45</span></div>
<div class="abs row" style="top:663px;background:#f3f6fa"><span style="left:8.3px;letter-spacing:-0.72px">PT Gema</span><span style="left:232px;letter-spacing:0.35px">Transportation/Trucking/Railroad</span><span style="left:520.5px;letter-spacing:-0.36px">Jawa Barat</span><span style="left:692.6px;letter-spacing:0.26px">Kabupaten Bandung</span><span class="d" style="left:1022px">25-11-2024 10:22</span></div>
<div class="abs row" style="top:708px;background:#fff"><span style="left:8.3px;letter-spacing:-1.45px">PT Jaya</span><span style="left:520.5px;letter-spacing:-0.16px">Jawa Timur</span><span style="left:692.6px;letter-spacing:0.36px">kota malang</span><span class="d" style="left:1022px">20-12-2024 08:33</span></div>
<div class="abs row" style="top:753px;background:#f3f6fa"><span style="left:8.3px;letter-spacing:-0.55px">PT Jaya Abadi</span><span style="left:232px;letter-spacing:0.0px">Design</span><span style="left:520.5px;letter-spacing:-0.25px">Jawa Tengah</span><span style="left:692.6px;letter-spacing:0.01px">Kota Semarang</span><span class="d" style="left:1022px">25-11-2024 09:32</span></div>
<div class="abs" style="left:1339px;top:258px;width:13px;height:548.5px;background:#e3e7ef"></div>
<div class="abs" style="left:1342px;top:272.5px;width:7px;height:317.5px;background:#c6cbd9;border-radius:3.5px"></div>
<svg class="abs" style="left:1341.4px;top:262.4px" width="8.4" height="5.4" viewBox="0 0 8.4 5.4" fill="none" ><path d="M0,5.4 L4.2,0 L8.4,5.4 Z" fill="#d0d4df"/></svg>
<svg class="abs" style="left:1341.4px;top:796.8px" width="8.4" height="5.4" viewBox="0 0 8.4 5.4" fill="none" ><path d="M0,0 L4.2,5.4 L8.4,0 Z" fill="#c6cbd9"/></svg>
<svg class="abs" style="left:26.1px;top:834.5px" width="15.5" height="17.8" viewBox="0 0 15.5 17.8" fill="none" ><path d="M7.8,0.5 L0.9,8.9 L7.8,17.3 M14.9,0.5 L8,8.9 L14.9,17.3" stroke="#5048e8" stroke-width="1.5"/></svg>
<svg class="abs" style="left:63.2px;top:834.5px" width="10.4" height="17.8" viewBox="0 0 10.4 17.8" fill="none" ><path d="M9.6,0.5 L1.1,8.9 L9.6,17.3" stroke="#5048e8" stroke-width="1.5"/></svg>
<div class="abs pt" style="left:91.46px;top:830.00px;font-size:18px;color:#4d545c;transform:scaleX(1.1371);">Halaman</div>
<div class="abs bx" style="left:178px;top:824px;width:70px;height:42px;"><span style='position:absolute;left:29.5px;top:0;line-height:40px;font-size:18px;color:#495057'>1</span></div>
<div class="abs pt" style="left:253.70px;top:830.00px;font-size:18px;color:#4d545c;transform:scaleX(1.1421);">/ 2</div>
<svg class="abs" style="left:294.2px;top:834.5px" width="10.4" height="17.8" viewBox="0 0 10.4 17.8" fill="none" ><path d="M0.8,0.5 L9.3,8.9 L0.8,17.3" stroke="#5048e8" stroke-width="1.5"/></svg>
<svg class="abs" style="left:326.6px;top:834.5px" width="15.5" height="17.8" viewBox="0 0 15.5 17.8" fill="none" ><path d="M0.6,0.5 L7.5,8.9 L0.6,17.3 M7.7,0.5 L14.6,8.9 L7.7,17.3" stroke="#5048e8" stroke-width="1.5"/></svg>
<svg class="abs" style="left:375.8px;top:833.6px" width="18.3" height="19.2" viewBox="0 0 18.3 19.2" fill="none" ><path d="M1,6.6 A8.7,8.7 0 0 1 17.4,5.8 M17.4,12.9 A8.7,8.7 0 0 1 1,13.7" stroke="#2e8b63" stroke-width="1.7"/><path d="M17.7,0.8 V6.2 H12.5 M0.6,18.4 V13.4 H5.8" stroke="#2e8b63" stroke-width="1.7"/></svg>
<div class="abs pt" style="left:1121.94px;top:830.00px;font-size:18px;color:#4d545c;transform:scaleX(1.0571);">1 - 20 dari 24</div>
<div class="abs bx" style="left:1247.5px;top:824px;width:104.5px;height:42px;"><span style='position:absolute;left:18px;top:0;line-height:40px;font-size:18.5px;color:#495057'>20</span></div>
<svg class="abs" style="left:1335.4px;top:842.2px" width="11.2" height="7.4" viewBox="0 0 11.2 7.4" fill="none" ><path d="M0.9,1 L5.6,5.8 L10.3,1" stroke="#343a40" stroke-width="2"/></svg>
</main>
</body>
</html>
